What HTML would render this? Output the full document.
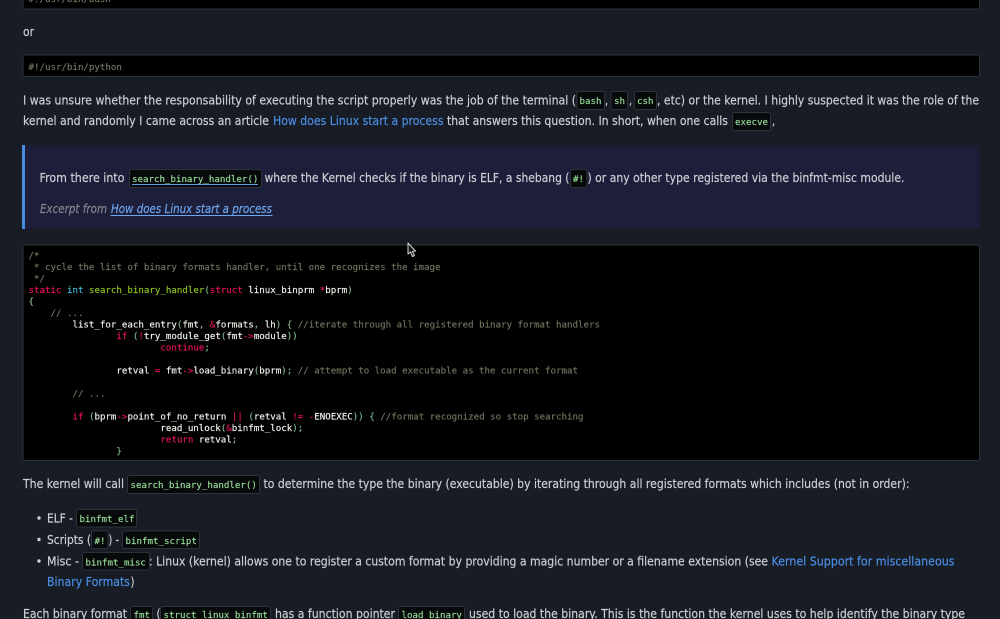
<!DOCTYPE html>
<html><head><meta charset="utf-8"><style>
html,body{margin:0;padding:0;background:#181c24;width:1000px;height:619px;overflow:hidden}
svg{display:block}
.b{font-family:"DejaVu Sans",sans-serif;font-size:12px;fill:#cdd0d4;stroke:#cdd0d4;stroke-width:.18px}
.l{fill:#4a8ee4;stroke:#4a8ee4}
.c{font-family:"DejaVu Sans Mono",monospace;font-size:9.13px;fill:#96dc98;stroke:#96dc98;stroke-width:.15px}
.m{font-family:"DejaVu Sans Mono",monospace;font-size:9.13px;fill:#f4f4ee;stroke:#f4f4ee;stroke-width:.15px;white-space:pre}
.k{fill:#e6125f;stroke:#e6125f}.t{fill:#45b5d0;stroke:#45b5d0}.f{fill:#8fc31f;stroke:#8fc31f}.p{fill:#7fb58c;stroke:#7fb58c}.o{fill:#75735f;stroke:#75735f}
.chip{fill:#07090b;stroke:#2d333b;stroke-width:1}
.pre{fill:#000;stroke:#2d333b;stroke-width:1}
.tx{filter:blur(.25px)}
</style></head><body>
<svg width="1000" height="619" viewBox="0 0 1000 619" xmlns="http://www.w3.org/2000/svg" xml:space="preserve">
<rect x="0" y="0" width="1000" height="619" fill="#181c24"/>
<rect class="pre" x="23" y="-6" width="956.5" height="15" rx="2"/>
<rect class="pre" x="23" y="55" width="956.5" height="21.5" rx="2"/>
<rect x="22" y="145" width="957.5" height="84" rx="3" fill="#1c1e3a"/>
<rect x="22" y="145" width="3" height="84" fill="#4a8be0"/>
<rect class="pre" x="23" y="245" width="956.5" height="215.5" rx="2"/>

<!-- chips -->
<rect class="chip" x="577" y="91.5" width="27.5" height="18" rx="2"/>
<rect class="chip" x="611" y="91.5" width="16.5" height="18" rx="2"/>
<rect class="chip" x="634.5" y="91.5" width="22" height="18" rx="2"/>
<rect class="chip" x="732.5" y="112.5" width="38" height="18" rx="2"/>
<rect class="chip" x="129.5" y="169.5" width="132" height="18" rx="2"/>
<rect class="chip" x="570.5" y="169.5" width="16.5" height="18" rx="2"/>
<rect class="chip" x="127.5" y="475.5" width="132" height="18" rx="2"/>
<rect class="chip" x="76.5" y="509.5" width="60" height="17.5" rx="2"/>
<rect class="chip" x="91.5" y="531" width="16.5" height="17.5" rx="2"/>
<rect class="chip" x="122.5" y="531" width="77" height="17.5" rx="2"/>
<rect class="chip" x="82.5" y="552.5" width="67" height="17.5" rx="2"/>
<rect class="chip" x="130.5" y="606.5" width="22" height="18" rx="2"/>
<rect class="chip" x="160.5" y="606.5" width="110" height="18" rx="2"/>
<rect class="chip" x="398.5" y="606.5" width="66" height="18" rx="2"/>

<circle cx="39" cy="518" r="1.7" fill="#cdd0d4"/>
<circle cx="39" cy="539.5" r="1.7" fill="#cdd0d4"/>
<circle cx="39" cy="561" r="1.7" fill="#cdd0d4"/>

<g class="tx">
<text class="m o" x="28.5" y="2">#!/usr/bin/bash</text>
<text class="b" x="23" y="36" textLength="11" lengthAdjust="spacingAndGlyphs">or</text>
<text class="m o" x="28.5" y="70">#!/usr/bin/python</text>

<text class="b" x="23" y="104.5" textLength="553" lengthAdjust="spacingAndGlyphs">I was unsure whether the responsability of executing the script properly was the job of the terminal (</text>
<text class="c" x="579.5" y="104">bash</text>
<text class="b" x="605" y="104.5" textLength="3" lengthAdjust="spacingAndGlyphs">,</text>
<text class="c" x="614" y="104">sh</text>
<text class="b" x="629" y="104.5" textLength="3" lengthAdjust="spacingAndGlyphs">,</text>
<text class="c" x="637" y="104">csh</text>
<text class="b" x="657" y="104.5" textLength="322" lengthAdjust="spacingAndGlyphs">, etc) or the kernel. I highly suspected it was the role of the</text>

<text class="b" x="23" y="125" textLength="246" lengthAdjust="spacingAndGlyphs">kernel and randomly I came across an article</text>
<text class="b l" x="273" y="125" textLength="170.5" lengthAdjust="spacingAndGlyphs">How does Linux start a process</text>
<text class="b" x="447" y="125" textLength="281" lengthAdjust="spacingAndGlyphs">that answers this question. In short, when one calls</text>
<text class="c" x="735" y="125">execve</text>
<text class="b" x="772" y="125" textLength="3" lengthAdjust="spacingAndGlyphs">,</text>

<text class="b" x="39.5" y="182" textLength="85" lengthAdjust="spacingAndGlyphs">From there into</text>
<text class="c" x="132" y="182">search_binary_handler()</text>
<rect x="132" y="184" width="126" height="1" fill="#5fa0e8"/>
<text class="b" x="264.5" y="182" textLength="305" lengthAdjust="spacingAndGlyphs">where the Kernel checks if the binary is ELF, a shebang (</text>
<text class="c" x="573" y="182">#!</text>
<text class="b" x="587.5" y="182" textLength="317" lengthAdjust="spacingAndGlyphs">) or any other type registered via the binfmt-misc module.</text>

<text class="b" x="40" y="213" textLength="67" lengthAdjust="spacingAndGlyphs" font-style="italic" style="fill:#85878f;stroke:#85878f">Excerpt from</text>
<text class="b" x="111" y="213" textLength="161" lengthAdjust="spacingAndGlyphs" font-style="italic" style="fill:#6ea6ee;stroke:#6ea6ee">How does Linux start a process</text>
<rect x="110.5" y="215" width="162" height="1" fill="#6ea6ee"/>

<text class="m o" x="28.5" y="258.5">/*</text>
<text class="m o" x="28.5" y="270"> * cycle the list of binary formats handler, until one recognizes the image</text>
<text class="m o" x="28.5" y="281.5"> */</text>
<text class="m" x="28.5" y="293"><tspan class="k">static</tspan> <tspan class="t">int</tspan> <tspan class="f">search_binary_handler</tspan><tspan class="p">(</tspan><tspan class="k">struct</tspan> linux_binprm <tspan class="k">*</tspan>bprm<tspan class="p">)</tspan></text>
<text class="m p" x="28.5" y="304.5">{</text>
<text class="m o" x="28.5" y="316">    // ...</text>
<text class="m" x="28.5" y="327.5">        list_for_each_entry<tspan class="p">(</tspan>fmt<tspan class="p">,</tspan> <tspan class="k">&amp;</tspan>formats<tspan class="p">,</tspan> lh<tspan class="p">)</tspan> <tspan class="p">{</tspan> <tspan class="o">//iterate through all registered binary format handlers</tspan></text>
<text class="m" x="28.5" y="339">                <tspan class="k">if</tspan> <tspan class="p">(</tspan><tspan class="k">!</tspan>try_module_get<tspan class="p">(</tspan>fmt<tspan class="k">-&gt;</tspan>module<tspan class="p">))</tspan></text>
<text class="m" x="28.5" y="350.5">                        <tspan class="k">continue</tspan><tspan class="p">;</tspan></text>
<text class="m" x="28.5" y="373.5">                retval <tspan class="k">=</tspan> fmt<tspan class="k">-&gt;</tspan>load_binary<tspan class="p">(</tspan>bprm<tspan class="p">);</tspan> <tspan class="o">// attempt to load executable as the current format</tspan></text>
<text class="m o" x="28.5" y="396.5">        // ...</text>
<text class="m" x="28.5" y="419.5">        <tspan class="k">if</tspan> <tspan class="p">(</tspan>bprm<tspan class="k">-&gt;</tspan>point_of_no_return <tspan class="k">||</tspan> <tspan class="p">(</tspan>retval <tspan class="k">!=</tspan> <tspan class="k">-</tspan>ENOEXEC<tspan class="p">))</tspan> <tspan class="p">{</tspan> <tspan class="o">//format recognized so stop searching</tspan></text>
<text class="m" x="28.5" y="431">                        read_unlock<tspan class="p">(</tspan><tspan class="k">&amp;</tspan>binfmt_lock<tspan class="p">);</tspan></text>
<text class="m" x="28.5" y="442.5">                        <tspan class="k">return</tspan> retval<tspan class="p">;</tspan></text>
<text class="m p" x="28.5" y="454">                }</text>

<text class="b" x="23" y="488" textLength="101" lengthAdjust="spacingAndGlyphs">The kernel will call</text>
<text class="c" x="130.5" y="488">search_binary_handler()</text>
<text class="b" x="263.5" y="488" textLength="646" lengthAdjust="spacingAndGlyphs">to determine the type the binary (executable) by iterating through all registered formats which includes (not in order):</text>

<text class="b" x="47" y="522.5" textLength="26" lengthAdjust="spacingAndGlyphs">ELF -</text>
<text class="c" x="79.5" y="522">binfmt_elf</text>
<text class="b" x="47" y="544" textLength="44" lengthAdjust="spacingAndGlyphs">Scripts (</text>
<text class="c" x="94.5" y="544">#!</text>
<text class="b" x="108.5" y="544" textLength="10.5" lengthAdjust="spacingAndGlyphs">) -</text>
<text class="c" x="125.5" y="544">binfmt_script</text>
<text class="b" x="47" y="565.5" textLength="32" lengthAdjust="spacingAndGlyphs">Misc -</text>
<text class="c" x="85.5" y="565.5">binfmt_misc</text>
<text class="b" x="149" y="565.5" textLength="619" lengthAdjust="spacingAndGlyphs">: Linux (kernel) allows one to register a custom format by providing a magic number or a filename extension (see</text>
<text class="b l" x="771.5" y="565.5" textLength="183" lengthAdjust="spacingAndGlyphs">Kernel Support for miscellaneous</text>
<text class="b l" x="47" y="586" textLength="83" lengthAdjust="spacingAndGlyphs">Binary Formats</text>
<text class="b" x="130.5" y="586" textLength="4" lengthAdjust="spacingAndGlyphs">)</text>

<text class="b" x="23" y="618" textLength="104" lengthAdjust="spacingAndGlyphs">Each binary format</text>
<text class="c" x="133.5" y="618">fmt</text>
<text class="b" x="156.5" y="618" textLength="4" lengthAdjust="spacingAndGlyphs">(</text>
<text class="c" x="163.5" y="618">struct linux_binfmt</text>
<text class="b" x="275" y="618" textLength="120" lengthAdjust="spacingAndGlyphs">has a function pointer</text>
<text class="c" x="401.5" y="618">load_binary</text>
<text class="b" x="469" y="618" textLength="496" lengthAdjust="spacingAndGlyphs">used to load the binary. This is the function the kernel uses to help identify the binary type</text>
</g>

<path d="M408 243 L408 254 L410.5 252 L412.5 256.5 L414.5 255.5 L412.5 251.5 L415.5 251 Z" fill="#15181c" stroke="#d8d8d8" stroke-width="1" stroke-linejoin="round"/>
</svg>
</body></html>
